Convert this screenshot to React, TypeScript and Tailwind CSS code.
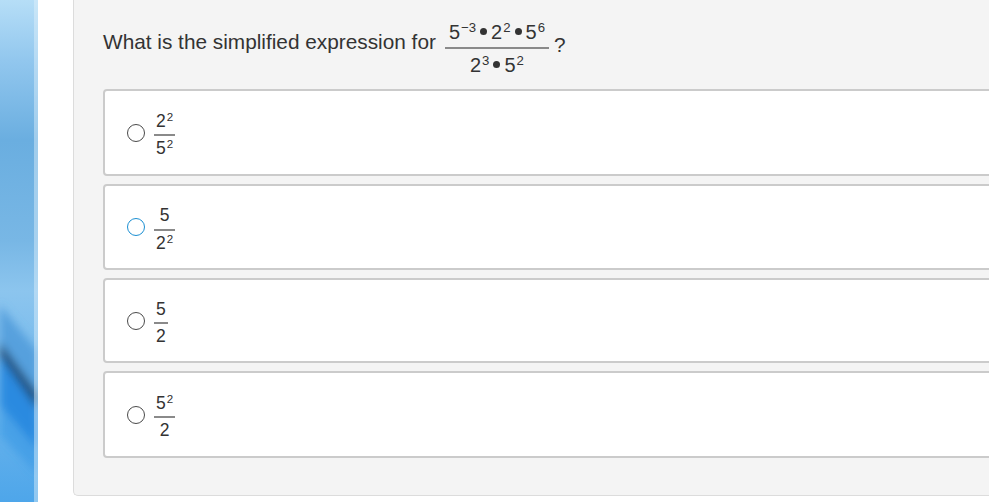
import type { ReactNode } from "react";

function Sup({ children }: { children: ReactNode }) {
  return <sup className="relative -top-[0.5em] ml-[1px] align-baseline text-[0.66em] leading-none">{children}</sup>;
}

function Frac({ num, den, size = "small" }: { num: ReactNode; den: ReactNode; size?: "small" | "large" }) {
  const large = size === "large";
  return (
    <span className={`inline-flex flex-col items-center ${large ? "text-[20px]" : "text-[17.5px]"}`}>
      <span className={`whitespace-nowrap leading-none ${large ? "px-[4px] pb-[5px]" : "px-[2px] pb-[4px]"}`}>{num}</span>
      <span className="h-[2px] w-full bg-[#8a8a8a]" />
      <span className={`whitespace-nowrap leading-none ${large ? "px-[4px] pt-[6px]" : "px-[2px] pt-[4px]"}`}>{den}</span>
    </span>
  );
}

function Dot() {
  return <span className="mx-[4px] inline-block h-[7px] w-[7px] -translate-y-[4px] rounded-full bg-[#333]" />;
}

function BlueStrip() {
  return (
    <svg width="38" height="502" viewBox="0 0 38 502" className="block shrink-0">
      <defs>
        <linearGradient id="base" x1="0" y1="0" x2="0" y2="1">
          <stop offset="0" stopColor="#b6def7" />
          <stop offset="0.12" stopColor="#92c7ee" />
          <stop offset="0.28" stopColor="#6aaee0" />
          <stop offset="0.48" stopColor="#78b7e5" />
          <stop offset="0.58" stopColor="#8cc5ee" />
          <stop offset="1" stopColor="#4ea6ea" />
        </linearGradient>
        <filter id="blur" x="-50%" y="-50%" width="200%" height="200%">
          <feGaussianBlur stdDeviation="4" />
        </filter>
      </defs>
      <rect width="38" height="502" fill="url(#base)" />
      <g filter="url(#blur)">
        <polygon points="0,305 38,352 38,400 0,350" fill="#4c98da" opacity="0.8" />
        <polygon points="0,355 38,400 38,450 0,405" fill="#2a8ae0" />
        <polygon points="0,342 38,394 38,410 0,356" fill="#1b3c62" opacity="0.85" />
        <polygon points="0,405 38,450 38,475 0,435" fill="#3d9ae6" opacity="0.7" />
      </g>
      <rect x="34" width="4" height="502" fill="#e3f1fa" opacity="0.45" />
    </svg>
  );
}

function Option({ selected, children, h }: { selected?: boolean; children: ReactNode; h: string }) {
  return (
    <div className={`flex w-[900px] items-center rounded-[4px] border-2 border-[#cbcbcb] bg-white pl-[22px] ${h}`}>
      <span
        className={`h-[18px] w-[18px] shrink-0 rounded-full border-[1.5px] ${selected ? "border-[#1b8fd2]" : "border-[#4a4a4a]"}`}
      />
      <span className="ml-[9px] mt-[2px]">{children}</span>
    </div>
  );
}

export default function App() {
  return (
    <div className="flex h-[502px] w-[989px] overflow-hidden bg-white font-['Liberation_Sans',Arial,sans-serif] text-[#333]">
      <BlueStrip />
      <div className="ml-[35px] h-[496px] w-[960px] shrink-0 rounded-bl-[5px] border-b border-l border-[#dcdcdc] bg-[#f4f4f4] pl-[29px]">
        <div className="flex h-[87px] items-center pb-[1px] text-[20.8px]">
          <span className="relative top-[-1px]">What is the simplified expression for</span>
          <span className="ml-[9px] mt-[5px]">
            <Frac
              size="large"
              num={
                <>
                  5<Sup>−3</Sup>
                  <Dot />2<Sup>2</Sup>
                  <Dot />5<Sup>6</Sup>
                </>
              }
              den={
                <>
                  2<Sup>3</Sup>
                  <Dot />5<Sup>2</Sup>
                </>
              }
            />
          </span>
          <span className="relative top-[2px] ml-[5px]">?</span>
        </div>
        <div className="mt-[2px] flex flex-col gap-[8px]">
          <Option h="h-[87px]">
            <Frac num={<>2<Sup>2</Sup></>} den={<>5<Sup>2</Sup></>} />
          </Option>
          <Option selected h="h-[86px]">
            <Frac num={<>5</>} den={<>2<Sup>2</Sup></>} />
          </Option>
          <Option h="h-[85px]">
            <Frac num={<>5</>} den={<>2</>} />
          </Option>
          <Option h="h-[87px]">
            <Frac num={<>5<Sup>2</Sup></>} den={<>2</>} />
          </Option>
        </div>
      </div>
    </div>
  );
}
